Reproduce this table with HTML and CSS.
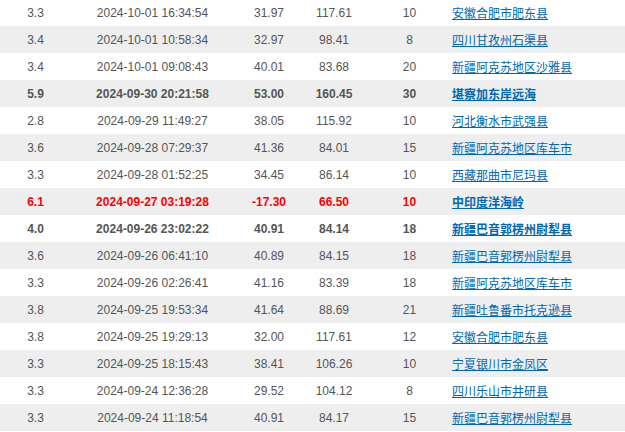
FILE: index.html
```html
<!DOCTYPE html>
<html lang="zh-CN">
<head>
<meta charset="utf-8">
<link rel="stylesheet" href="styles.css">
</head>
<body>
<div class="wrap">
<table class="quakes">
<colgroup>
<col class="c-m"><col class="c-t"><col class="c-lat"><col class="c-lon"><col class="c-d"><col class="c-loc">
</colgroup>
<tbody>
<tr><td>3.3</td><td>2024-10-01 16:34:54</td><td>31.97</td><td>117.61</td><td class="dep">10</td><td class="loc"><a href="#">安徽合肥市肥东县</a></td></tr>
<tr><td>3.4</td><td>2024-10-01 10:58:34</td><td>32.97</td><td>98.41</td><td class="dep">8</td><td class="loc"><a href="#">四川甘孜州石渠县</a></td></tr>
<tr><td>3.4</td><td>2024-10-01 09:08:43</td><td>40.01</td><td>83.68</td><td class="dep">20</td><td class="loc"><a href="#">新疆阿克苏地区沙雅县</a></td></tr>
<tr class="strong"><td>5.9</td><td>2024-09-30 20:21:58</td><td>53.00</td><td>160.45</td><td class="dep">30</td><td class="loc"><a href="#">堪察加东岸远海</a></td></tr>
<tr><td>2.8</td><td>2024-09-29 11:49:27</td><td>38.05</td><td>115.92</td><td class="dep">10</td><td class="loc"><a href="#">河北衡水市武强县</a></td></tr>
<tr><td>3.6</td><td>2024-09-28 07:29:37</td><td>41.36</td><td>84.01</td><td class="dep">15</td><td class="loc"><a href="#">新疆阿克苏地区库车市</a></td></tr>
<tr><td>3.3</td><td>2024-09-28 01:52:25</td><td>34.45</td><td>86.14</td><td class="dep">10</td><td class="loc"><a href="#">西藏那曲市尼玛县</a></td></tr>
<tr class="strong alert"><td>6.1</td><td>2024-09-27 03:19:28</td><td>-17.30</td><td>66.50</td><td class="dep">10</td><td class="loc"><a href="#">中印度洋海岭</a></td></tr>
<tr class="strong"><td>4.0</td><td>2024-09-26 23:02:22</td><td>40.91</td><td>84.14</td><td class="dep">18</td><td class="loc"><a href="#">新疆巴音郭楞州尉犁县</a></td></tr>
<tr><td>3.6</td><td>2024-09-26 06:41:10</td><td>40.89</td><td>84.15</td><td class="dep">18</td><td class="loc"><a href="#">新疆巴音郭楞州尉犁县</a></td></tr>
<tr><td>3.3</td><td>2024-09-26 02:26:41</td><td>41.16</td><td>83.39</td><td class="dep">18</td><td class="loc"><a href="#">新疆阿克苏地区库车市</a></td></tr>
<tr><td>3.8</td><td>2024-09-25 19:53:34</td><td>41.64</td><td>88.69</td><td class="dep">21</td><td class="loc"><a href="#">新疆吐鲁番市托克逊县</a></td></tr>
<tr><td>3.8</td><td>2024-09-25 19:29:13</td><td>32.00</td><td>117.61</td><td class="dep">12</td><td class="loc"><a href="#">安徽合肥市肥东县</a></td></tr>
<tr><td>3.3</td><td>2024-09-25 18:15:43</td><td>38.41</td><td>106.26</td><td class="dep">10</td><td class="loc"><a href="#">宁夏银川市金凤区</a></td></tr>
<tr><td>3.3</td><td>2024-09-24 12:36:28</td><td>29.52</td><td>104.12</td><td class="dep">8</td><td class="loc"><a href="#">四川乐山市井研县</a></td></tr>
<tr><td>3.3</td><td>2024-09-24 11:18:54</td><td>40.91</td><td>84.17</td><td class="dep">15</td><td class="loc"><a href="#">新疆巴音郭楞州尉犁县</a></td></tr>
</tbody>
</table>
</div>
</body>
</html>
```
FILE: styles.css
```css
html, body {
  margin: 0;
  padding: 0;
  background: #fff;
  overflow: hidden;
}
.wrap {
  margin-top: -1px;
}
.quakes {
  border-collapse: collapse;
  table-layout: fixed;
  width: 625px;
  font-family: "Liberation Sans", Arial, "Noto Sans CJK SC", sans-serif;
  font-size: 12px;
  color: #555;
}
.c-m { width: 71px; }
.c-t { width: 163px; }
.c-lat { width: 70px; }
.c-lon { width: 60px; }
.c-d { width: 85px; }
.c-loc { width: 176px; }
.quakes td {
  height: 27px;
  padding: 0;
  text-align: center;
  vertical-align: middle;
  white-space: nowrap;
  line-height: 14px;
}
.quakes tr:nth-child(even) td {
  background: #eeeeee;
}
.quakes td.dep {
  padding-left: 6px;
}
.quakes td.loc {
  text-align: left;
  padding-left: 3px;
  font-family: "Noto Sans CJK SC", sans-serif;
}
.quakes a {
  color: #0068b3;
  text-decoration: underline;
}
.strong td {
  font-weight: bold;
}
.alert td {
  color: #ff0000;
}
```
